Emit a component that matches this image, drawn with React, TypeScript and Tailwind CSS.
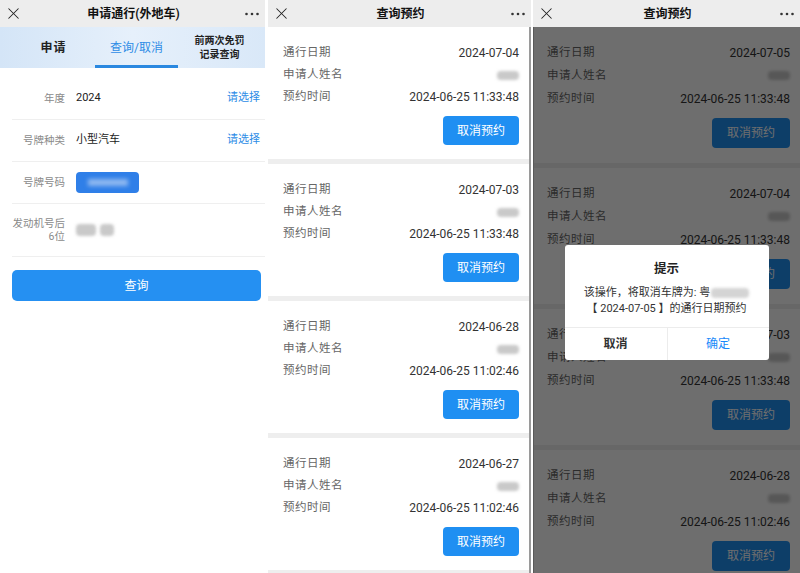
import React from 'react';
import { X } from 'lucide-react';

type Booking = { date: string; time: string };

const listA: Booking[] = [
  { date: '2024-07-04', time: '2024-06-25 11:33:48' },
  { date: '2024-07-03', time: '2024-06-25 11:33:48' },
  { date: '2024-06-28', time: '2024-06-25 11:02:46' },
  { date: '2024-06-27', time: '2024-06-25 11:02:46' },
];

const listB: Booking[] = [
  { date: '2024-07-05', time: '2024-06-25 11:33:48' },
  { date: '2024-07-04', time: '2024-06-25 11:33:48' },
  { date: '2024-07-03', time: '2024-06-25 11:33:48' },
  { date: '2024-06-28', time: '2024-06-25 11:02:46' },
];

const Dots: React.FC = () => (
  <svg width="16" height="6" viewBox="0 0 16 6" className="text-[#333]">
    <circle cx="2.5" cy="3" r="1.3" fill="currentColor" />
    <circle cx="8" cy="3" r="1.3" fill="currentColor" />
    <circle cx="13.5" cy="3" r="1.3" fill="currentColor" />
  </svg>
);

const TopBar: React.FC<{ title: string }> = ({ title }) => (
  <div className="h-[27px] bg-[#ededed] flex items-center justify-between pl-[4px] pr-[5px] shrink-0">
    <X size={19} strokeWidth={1.3} className="text-[#222]" />
    <span className="text-[12px] font-semibold text-[#111]">{title}</span>
    <Dots />
  </div>
);

const Blur: React.FC<{ className?: string }> = ({ className }) => (
  <div className={`rounded-sm bg-[#c9c9c9] blur-[1.5px] ${className ?? ''}`} />
);

const FormRow: React.FC<{ label: React.ReactNode; children?: React.ReactNode; pick?: boolean; tall?: boolean }> = ({
  label,
  children,
  pick,
  tall,
}) => (
  <div
    className={`flex items-center ml-[12px] pr-[5px] border-b border-[#efefef] ${tall ? 'h-[53px]' : 'h-[42px]'}`}
  >
    <div className="w-[53px] text-right text-[10.5px] leading-[13px] text-[#8a8a8a]">{label}</div>
    <div className="ml-[11px] flex-1 text-[11px] text-[#222]">{children}</div>
    {pick && <span className="text-[11px] text-[#2d8ce6]">请选择</span>}
  </div>
);

const ApplyPanel: React.FC = () => (
  <div className="w-[265px] shrink-0 flex flex-col bg-white">
    <TopBar title="申请通行(外地车)" />
    <div className="h-[41px] bg-gradient-to-r from-[#d4e5f7] via-[#e6f0fb] to-[#d9e8f8] grid grid-cols-[83px_83px_83px] pl-[12px]">
      <div className="flex items-center justify-center text-[12px] font-bold text-[#222] tracking-[1px]">申请</div>
      <div className="relative flex items-center justify-center text-[12px] text-[#2d8ce6]">
        查询/取消
        <div className="absolute left-0 right-0 bottom-0 h-[3px] bg-[#2a88e0]" />
      </div>
      <div className="flex flex-col items-center justify-center text-[10px] leading-[14px] font-semibold text-[#222]">
        <span>前两次免罚</span>
        <span>记录查询</span>
      </div>
    </div>
    <div className="pt-[10px]">
      <FormRow label="年度" pick>
        2024
      </FormRow>
      <FormRow label="号牌种类" pick>
        小型汽车
      </FormRow>
      <FormRow label="号牌号码">
        <div className="w-[63px] h-[21px] rounded-[4px] bg-[#2f7fe8] flex items-center justify-center">
          <div className="w-[40px] h-[7px] bg-[#8fb8f0] blur-[2px]" />
        </div>
      </FormRow>
      <FormRow
        tall
        label={
          <>
            发动机号后
            <br />
            6位
          </>
        }
      >
        <div className="flex gap-[4px]">
          <Blur className="w-[20px] h-[12px]" />
          <Blur className="w-[14px] h-[12px] bg-[#b8b8b8]" />
        </div>
      </FormRow>
    </div>
    <button className="mt-[13px] ml-[12px] mr-[4px] h-[31px] rounded-[5px] bg-[#2590f2] text-white text-[12px]">
      查询
    </button>
  </div>
);

const Card: React.FC<{ item: Booking; big?: boolean }> = ({ item, big }) => {
  const row = big ? 'h-[23px]' : 'h-[22px]';
  return (
    <>
      <div className={big ? 'pt-[14px] pb-[15px] pl-[13px] pr-[10px]' : 'pt-[15px] pb-[14px] pl-[15px] pr-[10px]'}>
        <div className={`flex items-center justify-between ${row}`}>
          <span className="text-[11.5px] text-[#666] tracking-[0.5px]">通行日期</span>
          <span className="text-[12px] text-[#333]">{item.date}</span>
        </div>
        <div className={`flex items-center justify-between ${row}`}>
          <span className="text-[11.5px] text-[#666] tracking-[0.5px]">申请人姓名</span>
          <Blur className="w-[22px] h-[9px]" />
        </div>
        <div className={`flex items-center justify-between ${row}`}>
          <span className="text-[11.5px] text-[#666] tracking-[0.5px]">预约时间</span>
          <span className="text-[12px] text-[#333]">{item.time}</span>
        </div>
        <div className="flex justify-end mt-[8px]">
          <button
            className={`rounded-[4px] bg-[#1f8ff2] text-white text-[12px] ${big ? 'w-[78px] h-[30px]' : 'w-[76px] h-[29px]'}`}
          >
            取消预约
          </button>
        </div>
      </div>
      <div className="h-[5px] bg-[#eeeeee]" />
    </>
  );
};

const ListPanel: React.FC = () => (
  <div className="w-[263px] shrink-0 flex flex-col bg-white">
    <TopBar title="查询预约" />
    <div className="flex flex-1 min-h-0">
      <div className="flex-1 overflow-hidden">
        {listA.map((b) => (
          <Card key={b.date} item={b} />
        ))}
      </div>
      <div className="w-[2px] bg-[#9a9a9a]" />
    </div>
  </div>
);

const DialogPanel: React.FC = () => (
  <div className="flex-1 flex flex-col bg-white relative">
    <TopBar title="查询预约" />
    <div className="flex-1 overflow-hidden border-l border-[#cfcfcf]">
      {listB.map((b) => (
        <Card key={b.date} item={b} big />
      ))}
    </div>
    <div className="absolute left-0 right-0 top-[27px] bottom-0 bg-black/[0.57] flex items-center justify-center pt-[5px]">
      <div className="w-[204px] bg-white rounded-[3px] overflow-hidden">
        <div className="pt-[17px] text-center text-[12.5px] leading-[14px] font-bold text-[#222]">提示</div>
        <div className="mt-[9px] pb-[10px] text-center text-[11px] leading-[16px] text-[#333]">
          <div className="flex items-center justify-center">
            该操作，将取消车牌为: 粤
            <Blur className="ml-[1px] w-[38px] h-[10px] bg-[#d4d4d4]" />
          </div>
          <div>【 2024-07-05 】的通行日期预约</div>
        </div>
        <div className="h-[33px] grid grid-cols-2 border-t border-[#ececec]">
          <div className="flex items-center justify-center text-[12px] font-bold text-[#333]">取消</div>
          <div className="flex items-center justify-center text-[12px] text-[#1989fa] border-l border-[#ececec]">
            确定
          </div>
        </div>
      </div>
    </div>
  </div>
);

export default function App() {
  return (
    <div className="w-[800px] h-[573px] flex bg-white overflow-hidden font-['Roboto','Noto_Sans_CJK_SC',sans-serif]">
      <ApplyPanel />
      <div className="w-[3px] shrink-0" />
      <ListPanel />
      <div className="w-[2px] shrink-0" />
      <DialogPanel />
    </div>
  );
}
